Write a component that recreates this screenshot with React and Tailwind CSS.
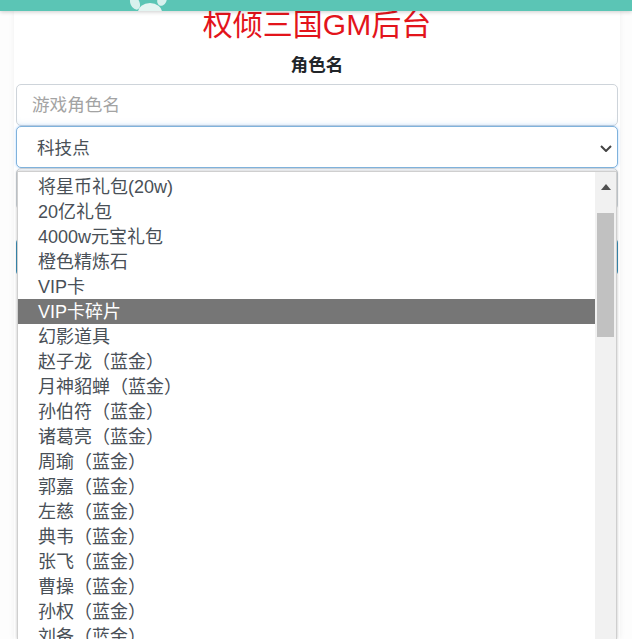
const items = [
  '将星币礼包(20w)',
  '20亿礼包',
  '4000w元宝礼包',
  '橙色精炼石',
  'VIP卡',
  'VIP卡碎片',
  '幻影道具',
  '赵子龙（蓝金）',
  '月神貂蝉（蓝金）',
  '孙伯符（蓝金）',
  '诸葛亮（蓝金）',
  '周瑜（蓝金）',
  '郭嘉（蓝金）',
  '左慈（蓝金）',
  '典韦（蓝金）',
  '张飞（蓝金）',
  '曹操（蓝金）',
  '孙权（蓝金）',
  '刘备（蓝金）',
];

const fontStack = "font-['Liberation_Sans','Noto_Sans_CJK_SC',sans-serif]";

// open list of the native select, lies over the rest of the form
function SelectList() {
  return (
    <div className="absolute left-[17px] top-[171px] flex h-[468px] w-[600px] overflow-hidden border-x border-t border-[#cfcfcf] bg-white shadow-[0_0_3px_rgba(0,0,0,0.25)]">
      <ul className="min-w-0 flex-1 pt-[2px]">
        {items.map((item) => (
          <li
            key={item}
            className={`h-[25px] pl-[20px] text-[18px] leading-[27px] ${
              item === 'VIP卡碎片' ? 'bg-[#767676] text-white' : 'text-[#495057]'
            }`}
          >
            {item}
          </li>
        ))}
      </ul>
      <div className="flex w-[21px] shrink-0 flex-col items-center bg-[#f1f1f1] pt-[12px]">
        <svg width="10" height="6" viewBox="0 0 10 6" className="shrink-0">
          <path d="M0 6 L5 0 L10 6 Z" fill="#505050" />
        </svg>
        <div className="mt-[23px] h-[124px] w-[17px] bg-[#c1c1c1]" />
      </div>
    </div>
  );
}

export default function App() {
  return (
    <div className={`relative h-[639px] w-[632px] overflow-hidden bg-[#fdfdfd] ${fontStack}`}>
      {/* top bar with paw logo */}
      <div className="relative z-10 h-[11px] overflow-hidden bg-[#5bc5b5] shadow-[0_1px_4px_rgba(0,0,0,0.2)]">
        <svg width="40" height="11" viewBox="0 0 40 11" className="absolute left-[129px] top-0">
          <ellipse cx="6" cy="3" rx="4.5" ry="7" fill="#d8f1ed" transform="rotate(-25 6 3)" />
          <ellipse cx="33" cy="0" rx="4.5" ry="6" fill="#d8f1ed" transform="rotate(25 33 0)" />
          <ellipse cx="21" cy="12" rx="12" ry="9" fill="#e4f5f2" />
        </svg>
      </div>

      <div className="ml-[14px] mr-[12px] h-[628px] bg-white px-[2px] shadow-[0_0_6px_rgba(0,0,0,0.06)]">
        <h1 className="h-[35px] text-center text-[30px] leading-[27px] font-normal text-[#e3141b]">
          权倾三国GM后台
        </h1>
        <div className="flex h-[38px] items-center justify-center text-[17.6px] font-bold text-[#212529]">
          角色名
        </div>
        <input
          readOnly
          placeholder="游戏角色名"
          className="block h-[42px] w-full rounded-[5px] border border-[#ced4da] bg-white px-[15px] text-[17.6px] text-[#495057] placeholder:text-[#a3a3a3] shadow-[inset_0_-6px_6px_-6px_rgba(120,180,230,0.25)]"
        />
        <div className="flex h-[42px] w-full items-center justify-between rounded-[5px] border border-[#7fb2dc] bg-white pt-[2px] pr-[5px] pl-[20px] text-[17.6px] text-[#495057] shadow-[0_0_3px_rgba(0,123,255,0.3)]">
          <span>科技点</span>
          <svg width="12" height="7" viewBox="0 0 12 7">
            <path d="M1 1 L6 6 L11 1" fill="none" stroke="#444" strokeWidth="2" />
          </svg>
        </div>
        {/* second input and button behind the open list */}
        <div className="h-[42px] rounded-[5px] border border-[#ced4da]" />
        <div className="mt-[28px] h-[38px] rounded-[5px] bg-[#3a8fb7]" />
      </div>

      <SelectList />
    </div>
  );
}
